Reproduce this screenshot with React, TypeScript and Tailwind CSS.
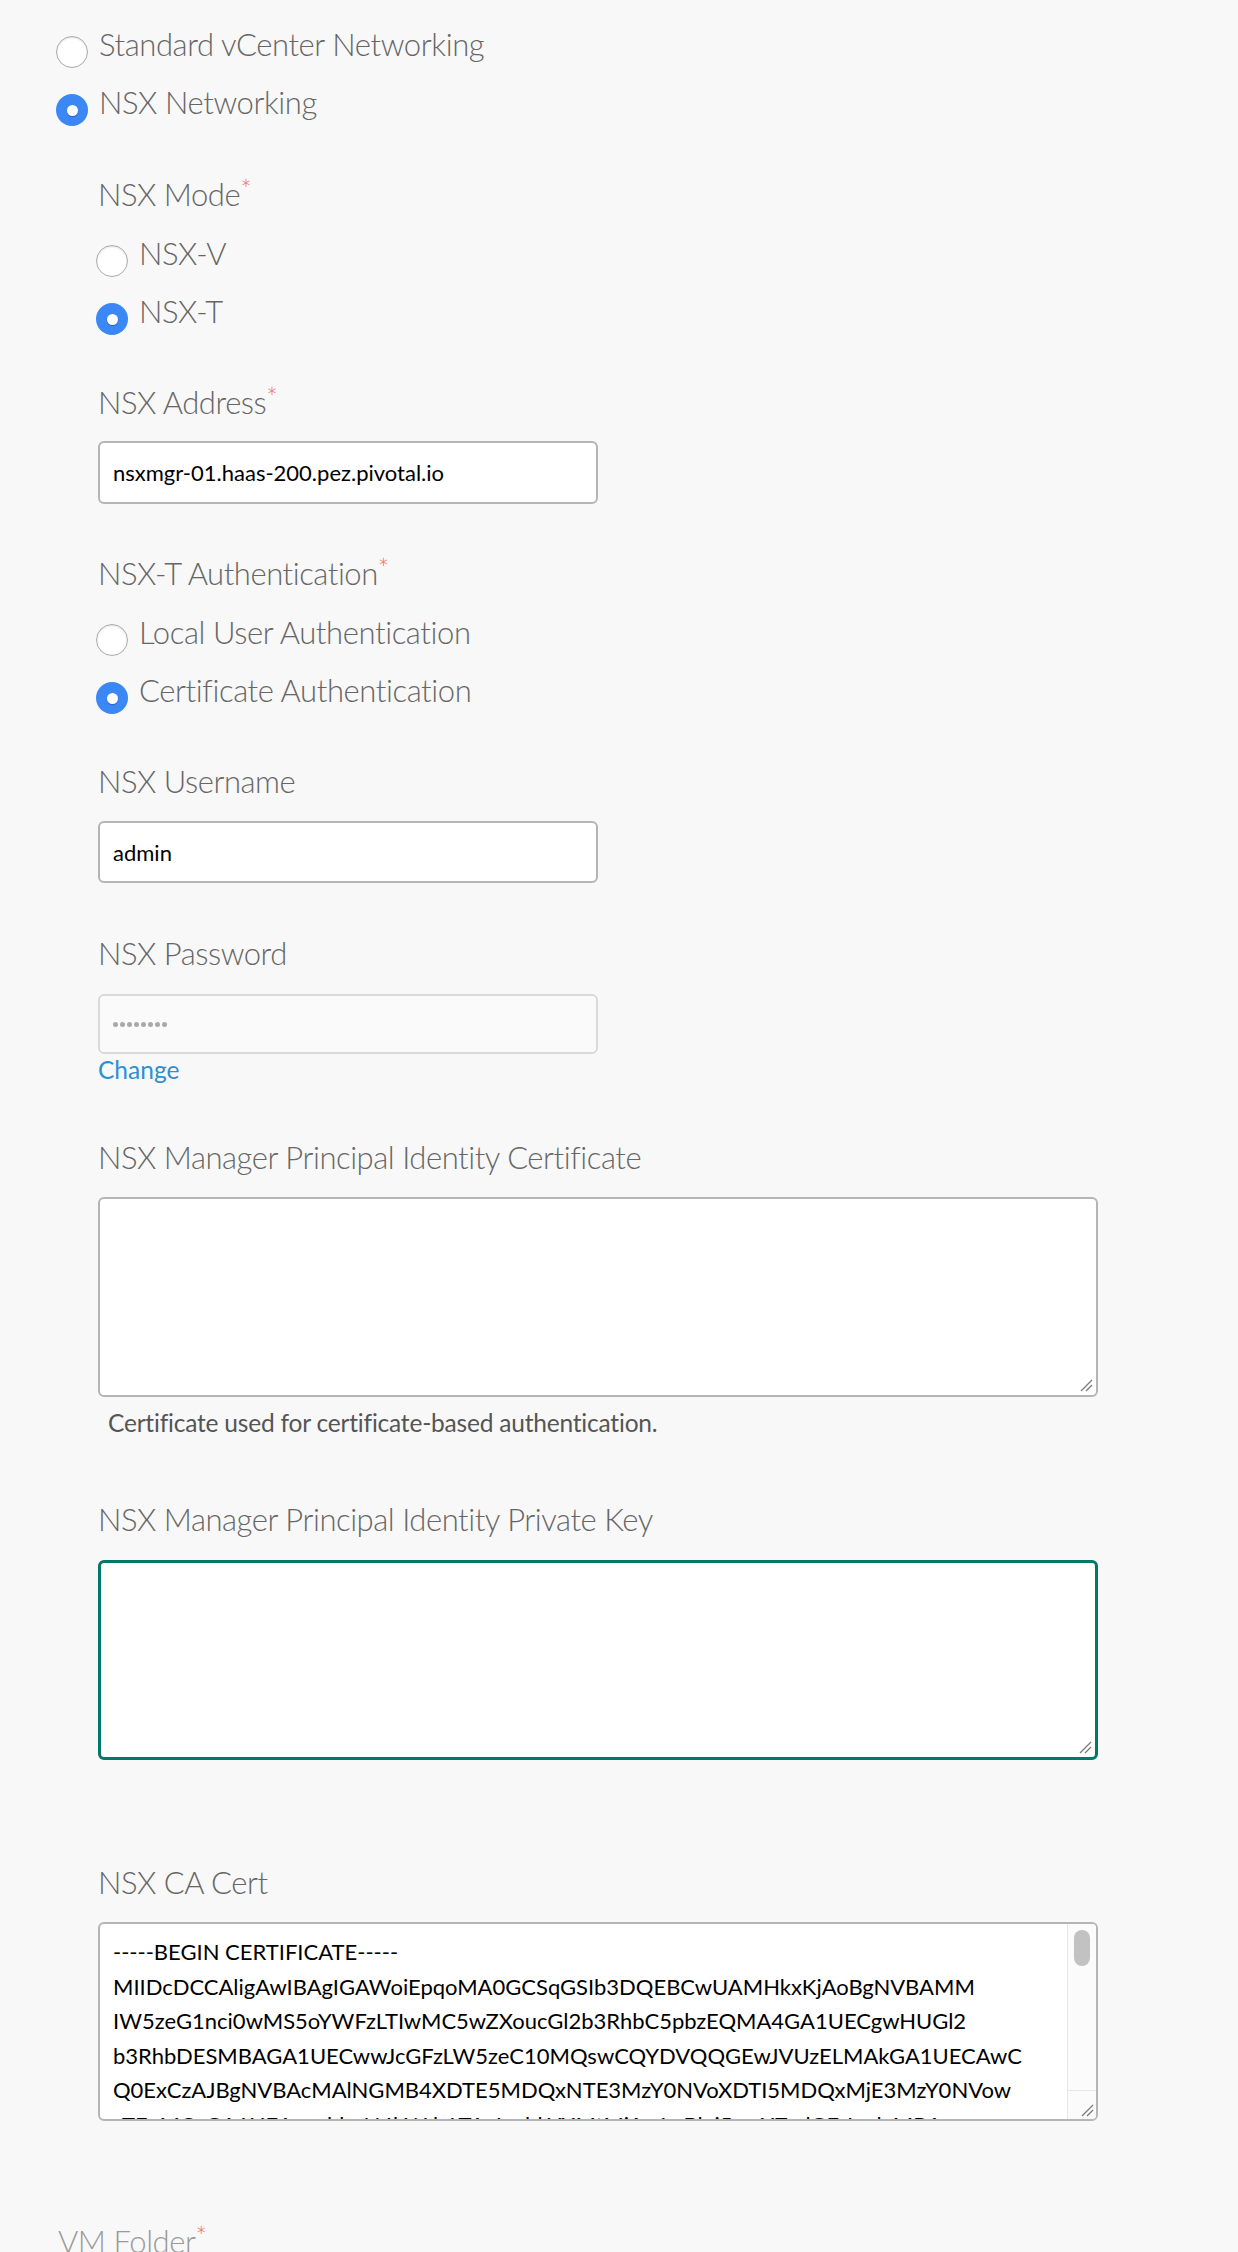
const certLines = [
  "-----BEGIN CERTIFICATE-----",
  "MIIDcDCCAligAwIBAgIGAWoiEpqoMA0GCSqGSIb3DQEBCwUAMHkxKjAoBgNVBAMM",
  "IW5zeG1nci0wMS5oYWFzLTIwMC5wZXoucGl2b3RhbC5pbzEQMA4GA1UECgwHUGl2",
  "b3RhbDESMBAGA1UECwwJcGFzLW5zeC10MQswCQYDVQQGEwJVUzELMAkGA1UECAwC",
  "Q0ExCzAJBgNVBAcMAlNGMB4XDTE5MDQxNTE3MzY0NVoXDTI5MDQxMjE3MzY0NVow",
  "eTEqMCgGA1UEAwwhbnN4bWdyLTAxLmhhYXMtMjAwLnBlei5waXZvdGFsLmlvMRAw",
];

const Grip = () => (
  <svg width="14" height="14" viewBox="0 0 14 14" className="block">
    <line x1="13" y1="2" x2="2" y2="13" stroke="#7a7a7a" strokeWidth="1.2" />
    <line x1="13" y1="7" x2="7" y2="13" stroke="#7a7a7a" strokeWidth="1.2" />
  </svg>
);

const Label = ({ text, req, faded }: { text: string; req?: boolean; faded?: boolean }) => (
  <div
    className={`h-[40px] leading-[40px] text-[31px] tracking-[-0.45px] font-light whitespace-nowrap ${
      faded ? "text-[#9a9a9a]" : "text-[#666]"
    }`}
  >
    {text}
    {req && <sup className="text-[27px] text-[#f2665e] top-[-7px]">*</sup>}
  </div>
);

const Radio = ({ label, checked }: { label: string; checked?: boolean }) => (
  <div className="flex items-start gap-[11px] -ml-[2px]">
    {checked ? (
      <div className="mt-[12px] w-[32px] h-[32px] rounded-full bg-[#3b87f6] flex items-center justify-center shrink-0">
        <div className="w-[11px] h-[11px] rounded-full bg-white shadow-[0_1px_1px_rgba(0,0,0,0.25)]" />
      </div>
    ) : (
      <div className="mt-[12px] w-[32px] h-[32px] rounded-full bg-white border-[1.5px] border-[#ababab] shadow-[inset_0_1px_2px_rgba(0,0,0,0.12)] shrink-0" />
    )}
    <span className="leading-[40px] text-[31px] tracking-[-0.4px] font-light text-[#666] whitespace-nowrap">{label}</span>
  </div>
);

const TextBox = ({ focused }: { focused?: boolean }) => (
  <div
    className={`w-[1000px] h-[200px] bg-white rounded-[6px] flex items-end justify-end p-[3px] ${
      focused ? "border-[3px] border-[#00796b]" : "border-2 border-[#b5b5b5]"
    }`}
  >
    <Grip />
  </div>
);

export default function App() {
  return (
    <div className="min-h-screen bg-[#f8f8f8] pl-[58px] pt-[24px] pb-[40px] font-['Lato',sans-serif]">
      {/* network type */}
      <div className="flex flex-col gap-[14px]">
        <Radio label="Standard vCenter Networking" />
        <Radio label="NSX Networking" checked />
      </div>

      {/* NSX settings */}
      <div className="pl-[40px] mt-[48px]">
        <Label text="NSX Mode" req />
        <div className="mt-[19px] flex flex-col gap-[14px]">
          <Radio label="NSX-V" />
          <Radio label="NSX-T" checked />
        </div>

        <div className="mt-[47px]">
          <Label text="NSX Address" req />
        </div>
        <div className="mt-[19px] w-[500px] h-[63px] bg-white border-2 border-[#b5b5b5] rounded-[6px] flex items-center px-[13px] text-[22px] text-black">
          nsxmgr-01.haas-200.pez.pivotal.io
        </div>

        <div className="mt-[49px]">
          <Label text="NSX-T Authentication" req />
        </div>
        <div className="mt-[19px] flex flex-col gap-[14px]">
          <Radio label="Local User Authentication" />
          <Radio label="Certificate Authentication" checked />
        </div>

        <div className="mt-[47px]">
          <Label text="NSX Username" />
        </div>
        <div className="mt-[20px] w-[500px] h-[62px] bg-white border-2 border-[#b5b5b5] rounded-[6px] flex items-center px-[13px] text-[22px] text-black">
          admin
        </div>

        <div className="mt-[50px]">
          <Label text="NSX Password" />
        </div>
        <div className="mt-[21px] w-[500px] h-[60px] bg-[#fafafa] border-2 border-[#dadada] rounded-[6px] flex items-center gap-[2px] px-[13px]">
          {Array.from({ length: 8 }).map((_, i) => (
            <span key={i} className="w-[5px] h-[5px] rounded-full bg-[#a9a9a9]" />
          ))}
        </div>
        <div className="leading-[32px] text-[24.5px] text-[#2d8fd4]">Change</div>

        <div className="mt-[51px]">
          <Label text="NSX Manager Principal Identity Certificate" />
        </div>
        <div className="mt-[20px]">
          <TextBox />
        </div>
        <div className="mt-[10px] pl-[10px] leading-[32px] text-[24.5px] tracking-[-0.2px] text-[#555]">
          Certificate used for certificate-based authentication.
        </div>

        <div className="mt-[60px]">
          <Label text="NSX Manager Principal Identity Private Key" />
        </div>
        <div className="mt-[21px]">
          <TextBox focused />
        </div>

        <div className="mt-[102px]">
          <Label text="NSX CA Cert" />
        </div>
        <div className="mt-[20px] w-[1000px] h-[199px] bg-white border-2 border-[#b5b5b5] rounded-[6px] flex overflow-hidden">
          <div className="flex-1 overflow-hidden pl-[13px] pt-[11px] text-[22px] leading-[34.5px] text-black whitespace-pre">
            {certLines.map((l) => (
              <div key={l}>{l}</div>
            ))}
          </div>
          <div className="w-[29px] flex flex-col border-l border-[#e6e6e6] bg-[#fbfbfb]">
            <div className="flex-1 flex justify-center pt-[6px]">
              <div className="w-[16px] h-[36px] rounded-full bg-[#c2c2c2]" />
            </div>
            <div className="h-[29px] border-t border-[#e6e6e6] flex items-end justify-end p-[2px]">
              <Grip />
            </div>
          </div>
        </div>
      </div>

      <div className="mt-[100px]">
        <Label text="VM Folder" req faded />
      </div>
    </div>
  );
}
